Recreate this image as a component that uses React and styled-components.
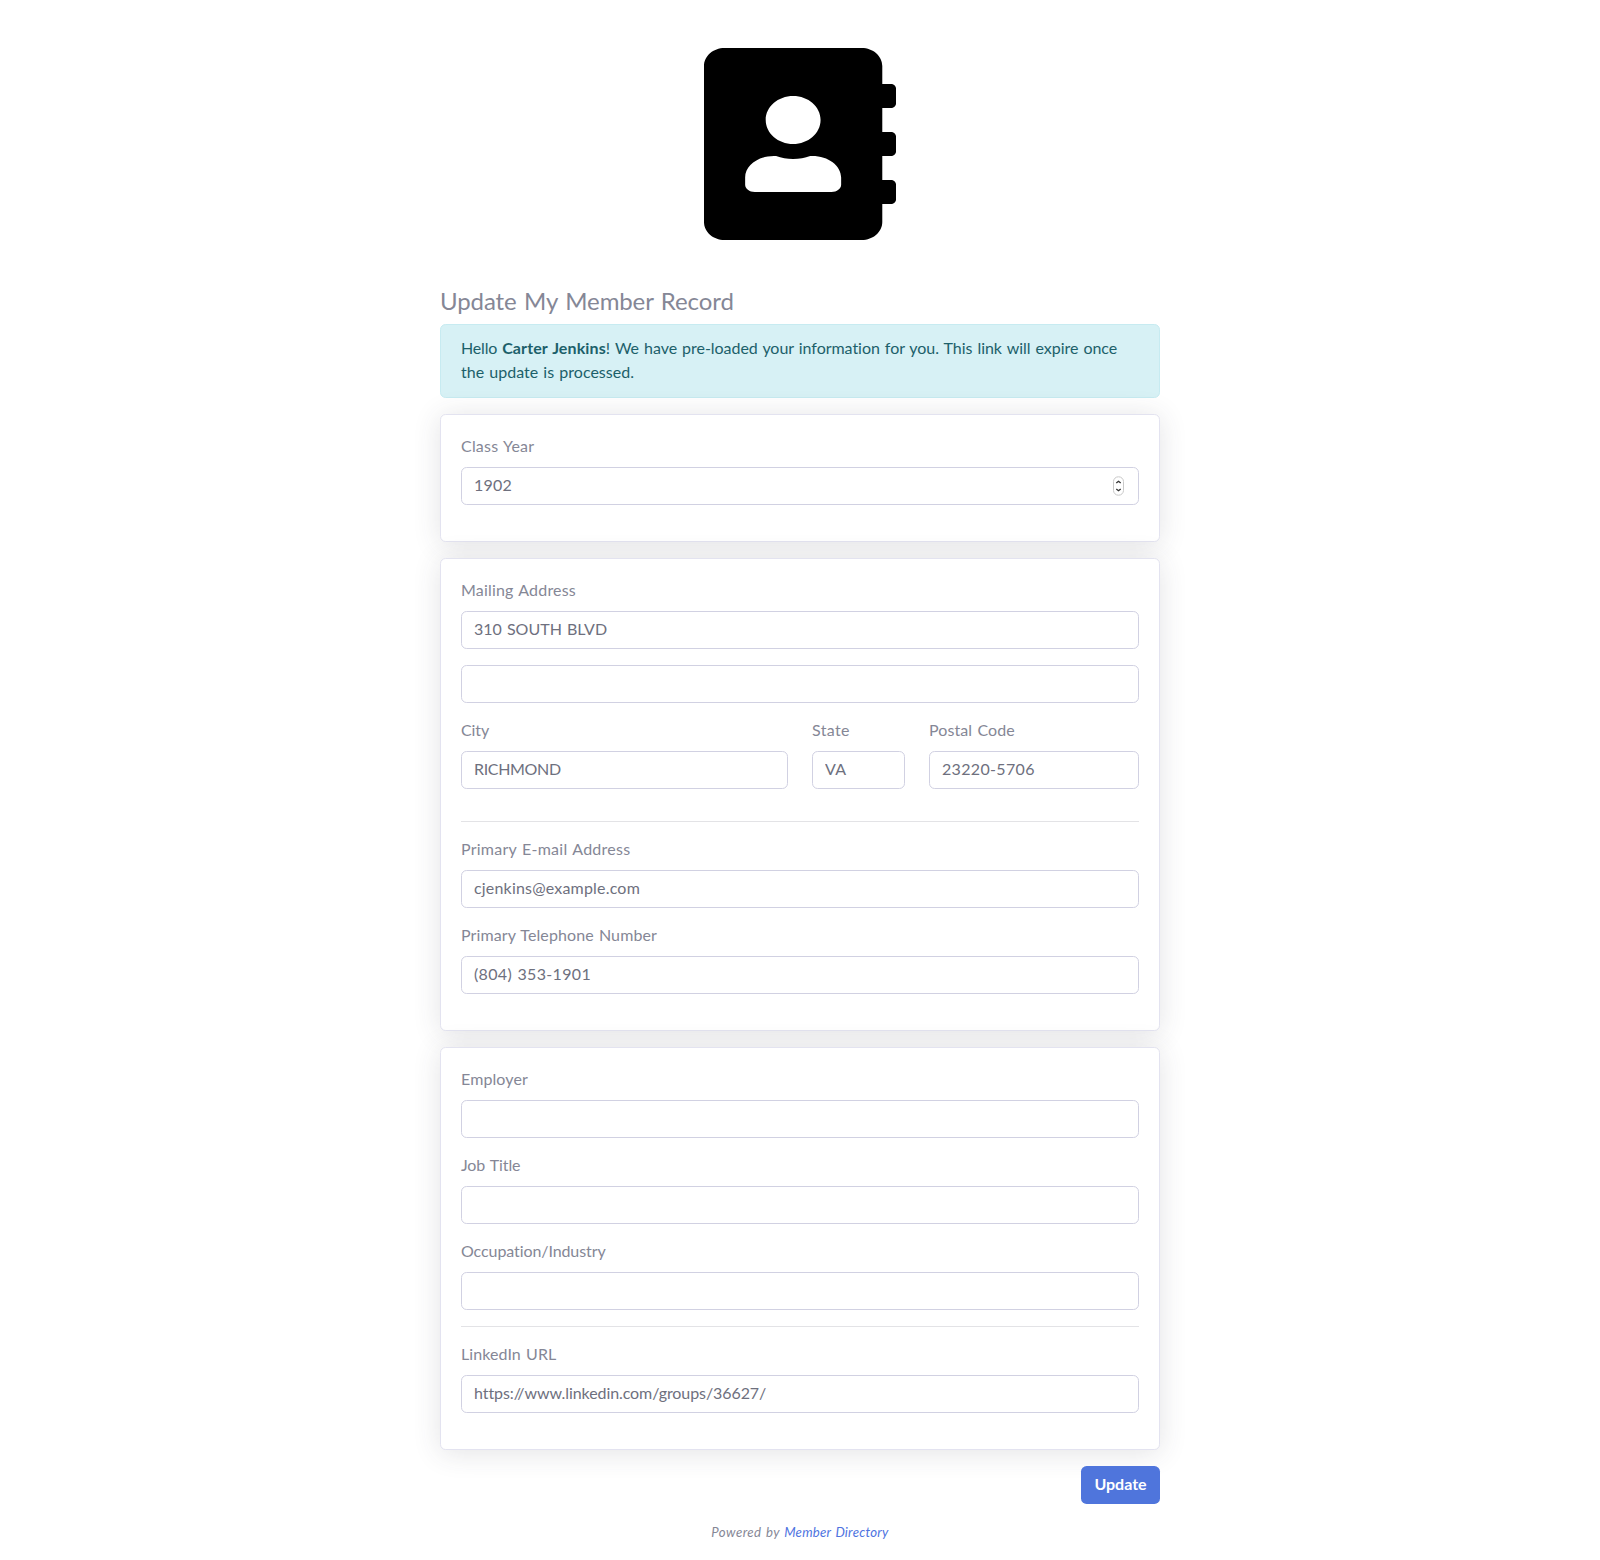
import React from "react";
import styled, { createGlobalStyle } from "styled-components";

const GlobalStyle = createGlobalStyle`
  *, *::before, *::after { box-sizing: border-box; }
  body {
    margin: 0;
    background: #fff;
    color: #858796;
    font-family: Lato, "Open Sans", sans-serif;
    font-size: 16px;
    line-height: 24px;
    word-spacing: 1px;
  }
`;

const Page = styled.main`
  width: 720px;
  margin: 0 auto;
  padding: 48px 0 16px;
`;

const Logo = styled.svg`
  display: block;
  width: 192px;
  height: 192px;
  margin: 0 auto 48px;
  fill: #000;
`;

const Title = styled.h1`
  margin: 0 0 8px;
  height: 28px;
  font-size: 24px;
  font-weight: 400;
  line-height: 25px;
  letter-spacing: -0.1px;
  word-spacing: 1.5px;
`;

const Alert = styled.div`
  margin-bottom: 16px;
  padding: 11px 20px 13px;
  border: 1px solid #c7ebf1;
  border-radius: 5.6px;
  background: #d7f1f5;
  color: #1c606a;
`;

const Run = styled.span`
  letter-spacing: ${(p) => p.$track || 0}px;
`;

const Name = styled.strong`
  font-weight: 700;
  letter-spacing: 0.12px;
`;

const Card = styled.section`
  margin-bottom: 16px;
  padding: 20px 20px 36px;
  border: 1px solid #e3e3f0;
  border-radius: 5.6px;
  background: #fff;
  box-shadow: 0 2.4px 28px 0 rgba(58, 59, 69, 0.14);
  display: flex;
  flex-direction: column;
  gap: 16px;
`;

const Group = styled.div`
  display: flex;
  flex-direction: column;
  gap: 8px;
`;

const Label = styled.label`
  height: 24px;
  line-height: 22px;
  letter-spacing: ${(p) => p.$track || 0}px;
`;

const Control = styled.div`
  display: flex;
  align-items: center;
  height: 38px;
  padding: 0 14px 0 12px;
  border: 1px solid #d1d1e2;
  border-radius: 5.6px;
  background: #fff;
`;

const Input = styled.input`
  flex: 1;
  min-width: 0;
  height: 24px;
  margin: 0;
  padding: 0 0 4px;
  border: 0;
  outline: 0;
  background: transparent;
  color: #6e707e;
  font: inherit;
  line-height: 20px;
  word-spacing: inherit;
  letter-spacing: ${(p) => p.$track || 0}px;
`;

const StepperIcon = styled.svg`
  flex: none;
  width: 11px;
  height: 20px;
`;

const AddressRow = styled.div`
  display: grid;
  grid-template-columns: 327px 93px 210px;
  gap: 24px;
`;

const Rule = styled.hr`
  width: 100%;
  height: 1px;
  margin: ${(p) => (p.$spaced ? "16px 0 0" : "0")};
  border: 0;
  background: #e3e3e6;
`;

const Actions = styled.div`
  display: flex;
  justify-content: flex-end;
`;

const Button = styled.button`
  width: 79px;
  height: 38px;
  padding: 0 0 2px;
  border: 0;
  border-radius: 5.6px;
  background: #4f75dc;
  color: #fff;
  font: inherit;
  font-weight: 700;
  letter-spacing: 0;
`;

const Footer = styled.footer`
  margin-top: 16px;
  text-align: center;
  font-size: 13.2px;
  font-style: italic;
  letter-spacing: 0.42px;
`;

const Link = styled.a`
  color: #4e73df;
  text-decoration: none;
  letter-spacing: 0.25px;
`;

function Stepper() {
  return (
    <StepperIcon viewBox="0 0 11 20" fill="none">
      <rect x="0.5" y="0.8" width="10" height="18.4" rx="4.8" fill="#fff" stroke="#c8c8c8" />
      <path d="M3.300 7.100 5.500 5.300 7.700 7.100M3.300 12.900 5.500 14.700 7.700 12.900" stroke="#333" strokeWidth="1.3" />
    </StepperIcon>
  );
}

function Field({ id, label, value = "", labelTrack, track, stepper }) {
  return (
    <Group>
      {label && <Label htmlFor={id} $track={labelTrack}>{label}</Label>}
      <Control>
        <Input id={id} defaultValue={value} $track={track} spellCheck={false} />
        {stepper && <Stepper />}
      </Control>
    </Group>
  );
}

export default function App() {
  return (
    <>
      <GlobalStyle />
      <Page>
        <Logo viewBox="0 0 448 512" preserveAspectRatio="none">
          <path d="M436 160c6.600 0 12-5.400 12-12v-40c0-6.600-5.400-12-12-12h-20V48c0-26.500-21.500-48-48-48H48C21.500 0 0 21.500 0 48v416c0 26.500 21.500 48 48 48h320c26.500 0 48-21.500 48-48v-48h20c6.600 0 12-5.400 12-12v-40c0-6.600-5.400-12-12-12h-20v-64h20c6.600 0 12-5.400 12-12v-40c0-6.600-5.400-12-12-12h-20v-64h20zm-228-32c35.300 0 64 28.700 64 64s-28.700 64-64 64-64-28.700-64-64 28.700-64 64-64zm112 236.800c0 10.600-10 19.200-22.400 19.200H118.400C106 384 96 375.400 96 364.800v-19.200c0-31.800 30.100-57.600 67.200-57.600h5c12.300 5.100 25.700 8 39.800 8s27.600-2.900 39.800-8h5c37.100 0 67.200 25.800 67.200 57.600v19.200z" />
        </Logo>
        <Title>Update My Member Record</Title>
        <Alert>
          <Run $track={-0.17}>Hello </Run>
          <Name>Carter Jenkins</Name>
          <Run $track={-0.04}>
            ! We have pre-loaded your information for you. This link will expire once{" "}
          </Run>
          <Run $track={0.02}>the update is processed.</Run>
        </Alert>

        <Card>
          <Field id="year" label="Class Year" labelTrack={0.2} value="1902" track={0.22} stepper />
        </Card>

        <Card>
          <Field id="street" label="Mailing Address" labelTrack={0.18} value="310 SOUTH BLVD" track={0} />
          <Field id="street2" />
          <AddressRow>
            <Field id="city" label="City" labelTrack={-0.1} value="RICHMOND" track={-0.33} />
            <Field id="state" label="State" labelTrack={0.35} value="VA" track={0.33} />
            <Field id="postal" label="Postal Code" labelTrack={0.1} value="23220-5706" track={0.335} />
          </AddressRow>
          <Rule $spaced />
          <Field id="email" label="Primary E-mail Address" labelTrack={0.25} value="cjenkins@example.com" track={0.19} />
          <Field id="phone" label="Primary Telephone Number" labelTrack={0.1} value="(804) 353-1901" track={0.33} />
        </Card>

        <Card>
          <Field id="employer" label="Employer" labelTrack={0.11} />
          <Field id="job" label="Job Title" labelTrack={-0.1} />
          <Field id="industry" label="Occupation/Industry" labelTrack={-0.09} />
          <Rule />
          <Field id="linkedin" label="LinkedIn URL" labelTrack={0.08} value="https://www.linkedin.com/groups/36627/" track={-0.08} />
        </Card>

        <Actions>
          <Button>Update</Button>
        </Actions>
        <Footer>
          Powered by <Link>Member Directory</Link>
        </Footer>
      </Page>
    </>
  );
}
